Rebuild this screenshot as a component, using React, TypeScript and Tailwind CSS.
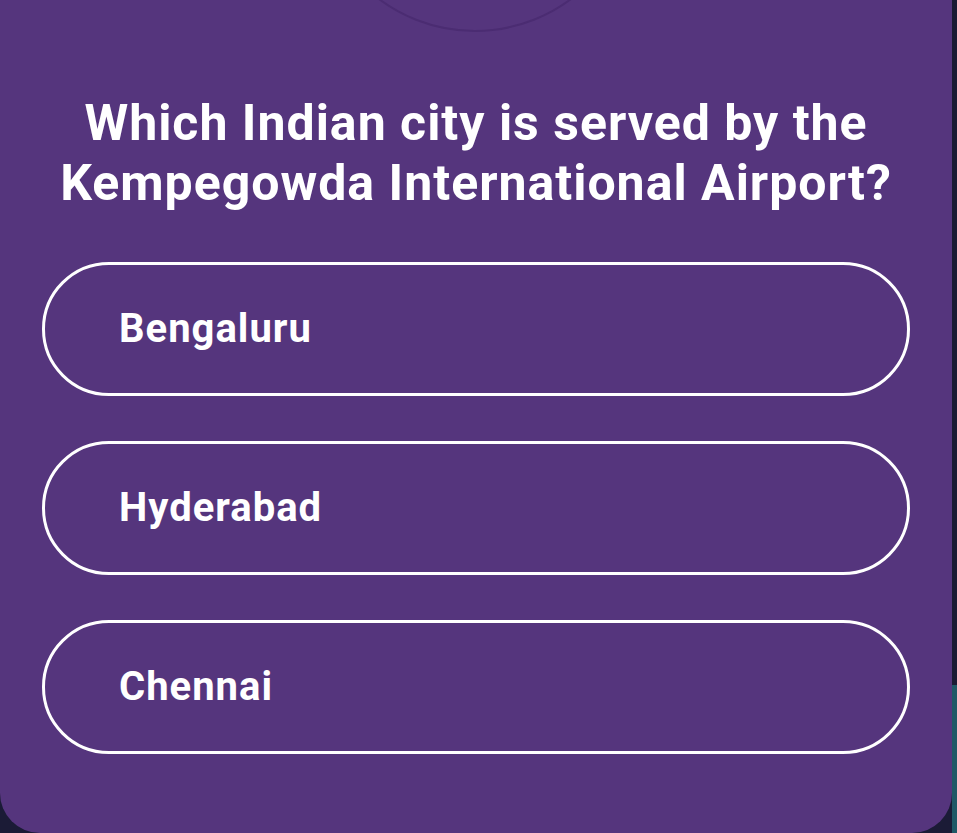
import React from 'react';

const options = ['Bengaluru', 'Hyderabad', 'Chennai'];

export default function App() {
  return (
    <div
      className="flex h-[833px] w-[957px] overflow-hidden bg-[#1b1b36]"
      style={{ fontFamily: 'Roboto, "Noto Sans", sans-serif' }}
    >
      <div className="relative flex h-full w-[952px] shrink-0 flex-col overflow-hidden rounded-b-[40px] bg-[#55357d] px-[42px] pt-[93px]">
        {/* timer ring peeking in from the top */}
        <div className="absolute left-[314px] top-[-290px] h-[322px] w-[322px] rounded-full border-2 border-[#4b2c72]" />

        <h1 className="text-center text-[50px] font-bold leading-[60px] tracking-[1px] text-white">
          Which Indian city is served by the
          <br />
          Kempegowda International Airport?
        </h1>

        <div className="mt-[49px] flex flex-col gap-[45px]">
          {options.map((opt) => (
            <button
              key={opt}
              className="flex h-[134px] w-full items-center rounded-full border-[3px] border-white pl-[74px] text-left text-[40px] font-bold tracking-[1px] text-white"
            >
              {opt}
            </button>
          ))}
        </div>
      </div>
      <div className="flex flex-1 flex-col">
        <div className="h-[685px] bg-[#1b1a33]" />
        <div className="flex-1 bg-[#1f5866]" />
      </div>
    </div>
  );
}
